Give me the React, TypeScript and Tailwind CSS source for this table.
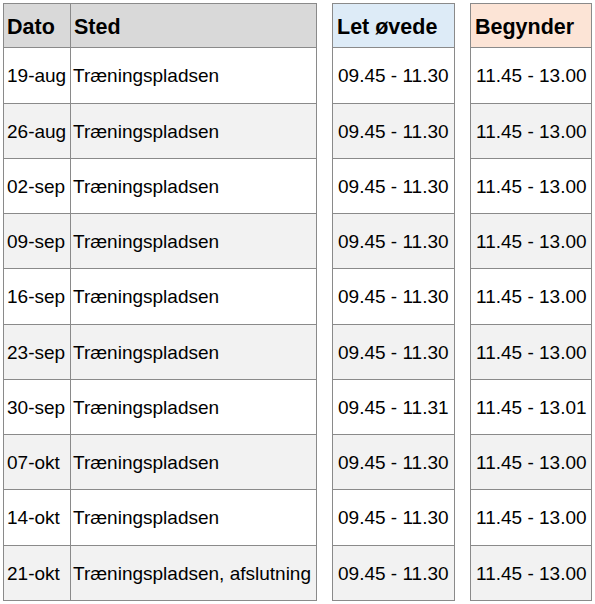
import React from "react";

const rows: { d: string; s: string; a: string; b: string }[] = [
  { d: "19-aug", s: "Træningspladsen", a: "09.45 - 11.30", b: "11.45 - 13.00" },
  { d: "26-aug", s: "Træningspladsen", a: "09.45 - 11.30", b: "11.45 - 13.00" },
  { d: "02-sep", s: "Træningspladsen", a: "09.45 - 11.30", b: "11.45 - 13.00" },
  { d: "09-sep", s: "Træningspladsen", a: "09.45 - 11.30", b: "11.45 - 13.00" },
  { d: "16-sep", s: "Træningspladsen", a: "09.45 - 11.30", b: "11.45 - 13.00" },
  { d: "23-sep", s: "Træningspladsen", a: "09.45 - 11.30", b: "11.45 - 13.00" },
  { d: "30-sep", s: "Træningspladsen", a: "09.45 - 11.31", b: "11.45 - 13.01" },
  { d: "07-okt", s: "Træningspladsen", a: "09.45 - 11.30", b: "11.45 - 13.00" },
  { d: "14-okt", s: "Træningspladsen", a: "09.45 - 11.30", b: "11.45 - 13.00" },
  { d: "21-okt", s: "Træningspladsen, afslutning", a: "09.45 - 11.30", b: "11.45 - 13.00" },
];

const heights = [56, 55, 55, 55, 56, 55, 55, 55, 56, 55];

function rowClass(i: number) {
  return i % 2 === 1 ? "bg-[#f2f2f2]" : "bg-white";
}

export default function App() {
  return (
    <div
      className="w-[595px] h-[604px] bg-white text-black pt-[3px] pl-[3px] flex gap-[15px]"
      style={{ fontFamily: '"Liberation Sans", Arial, sans-serif' }}
    >
      {/* Left table */}
      <div className="w-[314px] border-t border-l border-r border-[#8a8a8a] self-start">
        <div className="flex h-[44px] bg-[#d9d9d9] border-b border-[#8a8a8a] text-[21.5px] font-bold">
          <div className="w-[67px] border-r border-[#8a8a8a] flex items-center pl-[3px] pt-[3px]">Dato</div>
          <div className="flex-1 flex items-center pl-[3px] pt-[3px]">Sted</div>
        </div>
        {rows.map((r, i) => (
          <div
            key={i}
            className={`flex border-b border-[#8a8a8a] text-[19px] ${rowClass(i)}`}
            style={{ height: heights[i] }}
          >
            <div className="w-[67px] border-r border-[#8a8a8a] flex items-center pl-[3px] pt-[2px] whitespace-nowrap">{r.d}</div>
            <div className="flex-1 flex items-center pl-[2px] pt-[2px] whitespace-nowrap">{r.s}</div>
          </div>
        ))}
      </div>

      {/* Let øvede */}
      <div className="w-[123px] border-t border-l border-r border-[#8a8a8a] self-start">
        <div className="flex h-[44px] bg-[#ddebf7] border-b border-[#8a8a8a] text-[21.5px] font-bold items-center pl-[4px] pt-[3px]">
          Let øvede
        </div>
        {rows.map((r, i) => (
          <div
            key={i}
            className={`flex border-b border-[#8a8a8a] text-[19px] items-center pl-[5px] pt-[2px] whitespace-nowrap ${rowClass(i)}`}
            style={{ height: heights[i] }}
          >
            {r.a}
          </div>
        ))}
      </div>

      {/* Begynder */}
      <div className="w-[122px] border-t border-l border-r border-[#8a8a8a] self-start">
        <div className="flex h-[44px] bg-[#fce4d6] border-b border-[#8a8a8a] text-[21.5px] font-bold items-center pl-[4px] pt-[3px]">
          Begynder
        </div>
        {rows.map((r, i) => (
          <div
            key={i}
            className={`flex border-b border-[#8a8a8a] text-[19px] items-center pl-[5px] pt-[2px] whitespace-nowrap ${rowClass(i)}`}
            style={{ height: heights[i] }}
          >
            {r.b}
          </div>
        ))}
      </div>
    </div>
  );
}
